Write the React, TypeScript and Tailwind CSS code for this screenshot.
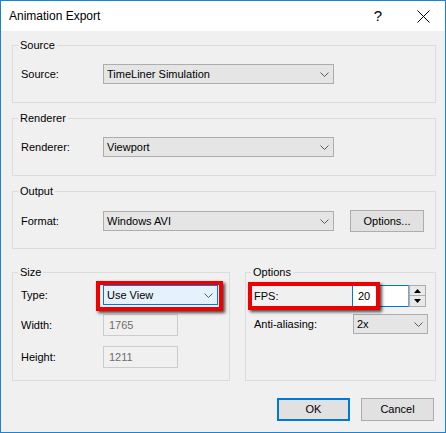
import type { ReactNode } from 'react';

function Chevron() {
  return (
    <svg width="9" height="5" viewBox="0 0 9 5" className="shrink-0">
      <path d="M0.5 0.5 L4.5 4.5 L8.5 0.5" fill="none" stroke="#5a5a5a" strokeWidth="1" />
    </svg>
  );
}

function Select({ value, width, focused }: { value: string; width: string; focused?: boolean }) {
  return (
    <div
      className={
        'h-[20px] flex items-center justify-between pl-[3px] pr-[4px] border ' +
        width +
        (focused ? ' border-[#0078d7] bg-[#e5f1fb]' : ' border-[#adadad] bg-[#e5e5e5]')
      }
    >
      <span>{value}</span>
      <Chevron />
    </div>
  );
}

function Group({ title, className, children }: { title: string; className?: string; children: ReactNode }) {
  return (
    <fieldset className={'border border-[#dcdcdc] p-0 m-0 min-w-0 ' + (className ?? '')}>
      <legend className="ml-[5px] px-[2px] leading-[14px]">{title}</legend>
      {children}
    </fieldset>
  );
}

function Row({ label, labelWidth = 'w-[82px]', children, className }: { label: string; labelWidth?: string; children: ReactNode; className?: string }) {
  return (
    <div className={'flex items-center ' + (className ?? '')}>
      <span className={'shrink-0 ' + labelWidth}>{label}</span>
      {children}
    </div>
  );
}

function Spinner() {
  return (
    <div className="w-[17px] h-[22px] flex flex-col">
      <div className="h-[11px] border border-[#adadad] bg-[#e9e9e9] flex items-center justify-center">
        <svg width="7" height="4" viewBox="0 0 7 4"><path d="M0 4 L3.5 0 L7 4 Z" fill="#000" /></svg>
      </div>
      <div className="h-[11px] border border-t-0 border-[#adadad] bg-[#e9e9e9] flex items-center justify-center">
        <svg width="7" height="4" viewBox="0 0 7 4"><path d="M0 0 L3.5 4 L7 0 Z" fill="#000" /></svg>
      </div>
    </div>
  );
}

export default function App() {
  return (
    <div className="w-[446px] h-[433px] border border-[#1883d7] bg-[#f0f0f0] flex flex-col font-['Liberation_Sans',Arial,sans-serif] text-[11px] text-black">
      {/* title bar */}
      <div className="h-[30px] shrink-0 bg-white flex items-center pl-[8px] pr-[15px]">
        <span className="flex-1 text-[12px]">Animation Export</span>
        <span className="text-[15px] mr-[35px]">?</span>
        <svg width="13" height="13" viewBox="0 0 13 13">
          <path d="M0.5 0.5 L12.5 12.5 M12.5 0.5 L0.5 12.5" stroke="#000" strokeWidth="1" />
        </svg>
      </div>

      <div className="flex-1 flex flex-col pl-[11px] pr-[9px] pt-[7px]">
        <Group title="Source">
          <div className="pl-[8px] pt-[12px] pb-[18px]">
            <Row label="Source:">
              <Select value="TimeLiner Simulation" width="w-[231px]" />
            </Row>
          </div>
        </Group>

        <Group title="Renderer" className="mt-[8px]">
          <div className="pl-[8px] pt-[12px] pb-[18px]">
            <Row label="Renderer:">
              <Select value="Viewport" width="w-[231px]" />
            </Row>
          </div>
        </Group>

        <Group title="Output" className="mt-[8px]">
          <div className="pl-[8px] pt-[12px] pb-[16px]">
            <Row label="Format:">
              <Select value="Windows AVI" width="w-[231px]" />
              <button className="ml-[16px] w-[74px] h-[22px] border border-[#adadad] bg-[#e1e1e1]">Options...</button>
            </Row>
          </div>
        </Group>

        <div className="flex gap-[15px] mt-[16px]">
          <Group title="Size" className="w-[218px]">
            <div className="pl-[8px] pt-[6px] pb-[12px]">
              <Row label="Type:">
                <div className="relative">
                  <Select value="Use View" width="w-[115px]" focused />
                  <div className="absolute left-[-7px] top-[-4px] w-[127px] h-[30px] border-[4px] border-[#ee0000] shadow-[2px_2px_3px_rgba(0,0,0,0.7)]" />
                </div>
              </Row>
              <Row label="Width:" className="mt-[9px]">
                <div className="w-[75px] h-[22px] border border-[#cccccc] flex items-center pl-[5px] text-[#6d6d6d]">1765</div>
              </Row>
              <Row label="Height:" className="mt-[10px]">
                <div className="w-[75px] h-[22px] border border-[#cccccc] flex items-center pl-[5px] text-[#6d6d6d]">1211</div>
              </Row>
            </div>
          </Group>

          <Group title="Options" className="w-[191px]">
            <div className="pl-[8px] pt-[6px] pb-[12px]">
              <div className="relative flex items-center h-[22px]">
                <span className="w-[98px] shrink-0">FPS:</span>
                <div className="w-[57px] h-[22px] border border-[#0078d7] border-r-[#7aa7d6] bg-white flex items-center pl-[5px]">20</div>
                <Spinner />
                <div className="absolute left-[-6px] top-[-3px] w-[132px] h-[28px] border-[4px] border-[#ee0000] shadow-[2px_2px_3px_rgba(0,0,0,0.7)]" />
              </div>
              <Row label="Anti-aliasing:" labelWidth="w-[99px]" className="mt-[7px]">
                <Select value="2x" width="w-[75px]" />
              </Row>
            </div>
          </Group>
        </div>

        <div className="flex justify-end gap-[11px] pr-[2px] mt-[17px]">
          <button className="w-[73px] h-[23px] border-2 border-[#0078d7] bg-[#e1e1e1]">OK</button>
          <button className="w-[73px] h-[23px] border border-[#adadad] bg-[#e1e1e1]">Cancel</button>
        </div>
      </div>
    </div>
  );
}
